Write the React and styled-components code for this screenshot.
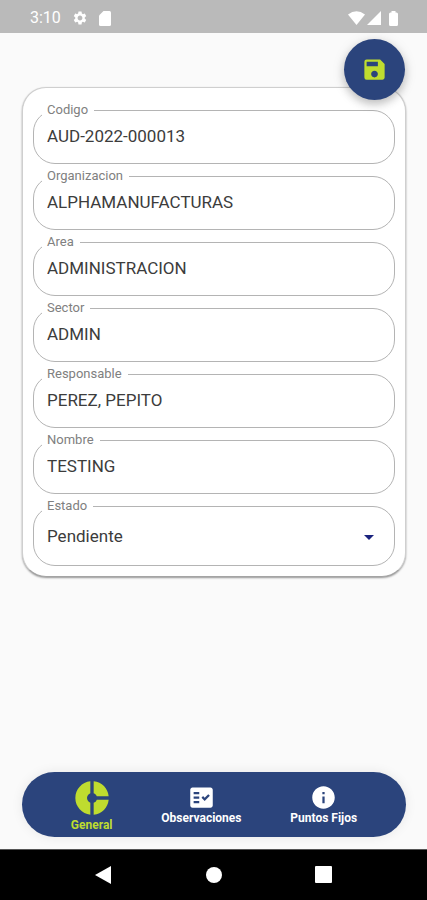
import React from "react";
import styled, { createGlobalStyle } from "styled-components";
import { MdSettings, MdSave, MdDonutSmall, MdFactCheck, MdInfo } from "react-icons/md";

const navy = "#2b447c";
const lime = "#bfdc2f";

const GlobalStyle = createGlobalStyle`
  *, *::before, *::after { box-sizing: border-box; }
  body {
    margin: 0;
    background: #fafafa;
    font-family: Roboto, "Liberation Sans", sans-serif;
  }
  button, input, select { font-family: inherit; }
`;

const Screen = styled.div`
  display: flex;
  flex-direction: column;
  min-height: 100vh;
`;

const StatusBar = styled.header`
  display: flex;
  justify-content: space-between;
  align-items: center;
  height: 33px;
  padding: 3px 28px 0 30px;
  background: #bababa;
  color: #fff;
`;

const StatusGroup = styled.div`
  display: flex;
  align-items: center;
  gap: ${({ $gap }) => $gap}px;
  svg { display: block; }
`;

const Clock = styled.span`
  font-size: 16px;
  line-height: 20px;
`;

const Content = styled.main`
  position: relative;
  flex: 1;
  padding: 54px 21px 24px 22px;
`;

const SaveButton = styled.button`
  position: absolute;
  top: 6px;
  right: 22px;
  display: flex;
  align-items: center;
  justify-content: center;
  width: 61px;
  height: 61px;
  padding: 0;
  border: 0;
  border-radius: 50%;
  background: ${navy};
  color: ${lime};
  box-shadow: 0 4px 8px rgba(0, 0, 0, 0.2), 0 2px 14px rgba(0, 0, 0, 0.1);
  cursor: pointer;
`;

const Card = styled.form`
  display: flex;
  flex-direction: column;
  gap: 4px;
  padding: 14px 10px 10px;
  border: 1px solid #cfcfcf;
  border-bottom-color: #a4a4a4;
  border-radius: 24px;
  background: #fff;
  box-shadow: 0 1px 2px rgba(0, 0, 0, 0.4);
`;

const Field = styled.fieldset`
  position: relative;
  min-width: 0;
  height: ${({ $tall }) => ($tall ? 68 : 62)}px;
  margin: 0;
  padding: 0 8px;
  border: 1px solid #b4b4b4;
  border-radius: 22px;
`;

const Legend = styled.legend`
  padding: 0 6px 0 5px;
  color: #808080;
  font-size: 13px;
  line-height: 16px;
`;

const TextInput = styled.input`
  display: block;
  width: 100%;
  height: 36px;
  padding: 0 5px;
  border: 0;
  outline: 0;
  background: transparent;
  color: #3c3c3c;
  font-size: 17px;
`;

const Select = styled.select`
  display: block;
  width: 100%;
  height: 44px;
  padding: 0 5px;
  border: 0;
  outline: 0;
  appearance: none;
  background: transparent;
  color: #3c3c3c;
  font-size: 17px;
`;

const Caret = styled.svg`
  position: absolute;
  right: 20px;
  bottom: 18px;
  pointer-events: none;
`;

const TabBar = styled.nav`
  display: flex;
  justify-content: space-evenly;
  align-items: center;
  height: 65px;
  margin: 0 21px 12px 22px;
  border-radius: 33px;
  background: ${navy};
  box-shadow: 0 0 12px rgba(0, 0, 0, 0.08);
`;

const Tab = styled.button`
  display: flex;
  flex-direction: column;
  align-items: center;
  padding: 0;
  border: 0;
  background: none;
  color: ${({ $active }) => ($active ? lime : "#fff")};
  font-size: 12px;
  font-weight: 700;
  line-height: 14px;
  cursor: pointer;
  svg { display: block; }
`;

const SystemBar = styled.footer`
  display: flex;
  justify-content: space-evenly;
  align-items: center;
  height: 51px;
  border-top: 1px solid #555;
  background: #000;
`;

const SystemButton = styled.button`
  width: 20px;
  height: 20px;
  padding: 0;
  border: 0;
  background: none;
  svg { display: block; }
`;

const fields = [
  ["codigo", "Codigo", "AUD-2022-000013"],
  ["organizacion", "Organizacion", "ALPHAMANUFACTURAS"],
  ["area", "Area", "ADMINISTRACION"],
  ["sector", "Sector", "ADMIN"],
  ["responsable", "Responsable", "PEREZ, PEPITO"],
  ["nombre", "Nombre", "TESTING"],
];

const tabs = [
  { label: "General", Icon: MdDonutSmall, size: 40, active: true },
  { label: "Observaciones", Icon: MdFactCheck, size: 27 },
  { label: "Puntos Fijos", Icon: MdInfo, size: 27 },
];

export default function App() {
  return (
    <Screen>
      <GlobalStyle />
      <StatusBar>
        <StatusGroup $gap={11}>
          <Clock>3:10</Clock>
          <MdSettings size={16} />
          <svg width="12" height="15" viewBox="0 0 12 15" aria-hidden="true">
            <path fill="#fff" d="M4.500 0H10.500Q12 0 12 1.500V13.500Q12 15 10.500 15H1.500Q0 15 0 13.500V4.500Z" />
          </svg>
        </StatusGroup>
        <StatusGroup $gap={2}>
          <svg width="17" height="14" viewBox="0 0 17 14" aria-hidden="true">
            <path fill="#fff" d="M0 3.500Q8.500-3 17 3.500L8.500 14Z" />
          </svg>
          <svg width="14" height="14" viewBox="0 0 14 14" aria-hidden="true">
            <path fill="#fff" d="M14 0V14H0Z" />
          </svg>
          <svg width="16" height="15" viewBox="0 0 16 15" aria-hidden="true">
            <path fill="#fff" d="M8.500 0h4v1.500h1q1.500 0 1.500 1.500v10.500q0 1.500-1.500 1.500h-6q-1.500 0-1.500-1.500V3q0-1.500 1.500-1.500h1Z" />
          </svg>
        </StatusGroup>
      </StatusBar>

      <Content>
        <Card>
          {fields.map(([id, label, value]) => (
            <Field key={id}>
              <Legend>
                <label htmlFor={id}>{label}</label>
              </Legend>
              <TextInput id={id} defaultValue={value} />
            </Field>
          ))}
          <Field $tall>
            <Legend>
              <label htmlFor="estado">Estado</label>
            </Legend>
            <Select id="estado" defaultValue="Pendiente">
              <option>Pendiente</option>
            </Select>
            <Caret width="10" height="5" viewBox="0 0 10 5" aria-hidden="true">
              <path fill="#1a237e" d="M0 0h10L5 5Z" />
            </Caret>
          </Field>
        </Card>
        <SaveButton type="button" aria-label="Guardar">
          <MdSave size={27} />
        </SaveButton>
      </Content>

      <TabBar>
        {tabs.map(({ label, Icon, size, active }) => (
          <Tab key={label} type="button" $active={active}>
            <Icon size={size} />
            {label}
          </Tab>
        ))}
      </TabBar>

      <SystemBar>
        <SystemButton type="button" aria-label="Back">
          <svg width="20" height="20" viewBox="0 0 20 20">
            <path fill="#fff" d="M19 1V19L3 10Z" />
          </svg>
        </SystemButton>
        <SystemButton type="button" aria-label="Home">
          <svg width="20" height="20" viewBox="0 0 20 20">
            <circle cx="10" cy="10" r="8" fill="#fff" />
          </svg>
        </SystemButton>
        <SystemButton type="button" aria-label="Recents">
          <svg width="20" height="20" viewBox="0 0 20 20">
            <rect x="0" y="1" width="17" height="17" rx="1" fill="#fff" />
          </svg>
        </SystemButton>
      </SystemBar>
    </Screen>
  );
}
